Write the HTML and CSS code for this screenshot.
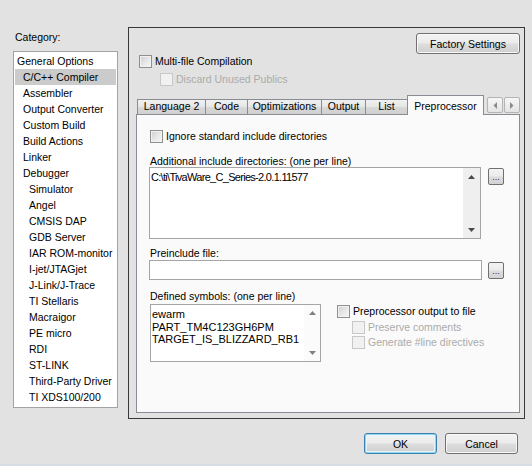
FILE: index.html
```html
<!DOCTYPE html>
<html>
<head>
<meta charset="utf-8">
<link rel="stylesheet" href="styles.css">
</head>
<body>
<div class="window">
  <div class="main">
    <div class="sidebar">
      <div class="cat-label">Category:</div>
      <div class="listbox">
        <div class="item l0">General Options</div>
        <div class="item l1 sel">C/C++ Compiler</div>
        <div class="item l1">Assembler</div>
        <div class="item l1">Output Converter</div>
        <div class="item l1">Custom Build</div>
        <div class="item l1">Build Actions</div>
        <div class="item l1">Linker</div>
        <div class="item l1">Debugger</div>
        <div class="item l2">Simulator</div>
        <div class="item l2">Angel</div>
        <div class="item l2">CMSIS DAP</div>
        <div class="item l2">GDB Server</div>
        <div class="item l2">IAR ROM-monitor</div>
        <div class="item l2">I-jet/JTAGjet</div>
        <div class="item l2">J-Link/J-Trace</div>
        <div class="item l2">TI Stellaris</div>
        <div class="item l2">Macraigor</div>
        <div class="item l2">PE micro</div>
        <div class="item l2">RDI</div>
        <div class="item l2">ST-LINK</div>
        <div class="item l2">Third-Party Driver</div>
        <div class="item l2">TI XDS100/200</div>
      </div>
    </div>
    <div class="panel">
      <div class="panel-head"><div class="btn factory">Factory Settings</div></div>
      <div class="chk row-multi"><span class="box"></span>Multi-file Compilation</div>
      <div class="chk disabled row-discard"><span class="box"></span>Discard Unused Publics</div>
      <div class="tabstrip">
        <div class="tab t-lang">Language 2</div>
        <div class="tab t-code">Code</div>
        <div class="tab t-opt">Optimizations</div>
        <div class="tab t-out">Output</div>
        <div class="tab t-list">List</div>
        <div class="tab active">Preprocessor</div>
        <div class="tab-scroll">
          <span class="sbtn"><svg width="4" height="7" viewBox="0 0 4 7"><polygon points="4,0 4,7 0.5,3.5" fill="#8a8a8a"/></svg></span>
          <span class="sbtn"><svg width="4" height="7" viewBox="0 0 4 7"><polygon points="0,0 0,7 3.5,3.5" fill="#8a8a8a"/></svg></span>
        </div>
      </div>
      <div class="tabpage">
        <div class="chk row-ignore"><span class="box"></span>Ignore standard include directories</div>
        <div class="field-label lbl-add">Additional include directories: (one per line)</div>
        <div class="field-row">
          <div class="textbox ta1">
            <div class="ta-text ta1-text">C:\ti\TivaWare_C_Series-2.0.1.11577</div>
            <div class="vscroll vs1">
              <span class="arrow"><svg width="7" height="4" viewBox="0 0 7 4"><polygon points="0,4 7,4 3.5,0" fill="#4a4a4a"/></svg></span>
              <span class="arrow"><svg width="7" height="4" viewBox="0 0 7 4"><polygon points="0,0 7,0 3.5,4" fill="#4a4a4a"/></svg></span>
            </div>
          </div>
          <div class="browse b1">...</div>
        </div>
        <div class="field-label lbl-pre">Preinclude file:</div>
        <div class="field-row row-input">
          <div class="textbox input1"></div>
          <div class="browse b2">...</div>
        </div>
        <div class="field-label lbl-def">Defined symbols: (one per line)</div>
        <div class="bottom-row">
          <div class="textbox ta2">
            <div class="ta-text ta2-text">ewarm<br>PART_TM4C123GH6PM<br>TARGET_IS_BLIZZARD_RB1</div>
            <div class="vscroll vs2">
              <span class="arrow"><svg width="7" height="4" viewBox="0 0 7 4"><polygon points="0,4 7,4 3.5,0" fill="#808080"/></svg></span>
              <span class="arrow"><svg width="7" height="4" viewBox="0 0 7 4"><polygon points="0,0 7,0 3.5,4" fill="#808080"/></svg></span>
            </div>
          </div>
          <div class="pp-col">
            <div class="chk row-pp"><span class="box"></span>Preprocessor output to file</div>
            <div class="chk disabled row-pres"><span class="box"></span>Preserve comments</div>
            <div class="chk disabled row-gen"><span class="box"></span>Generate #line directives</div>
          </div>
        </div>
      </div>
    </div>
  </div>
  <div class="footer">
    <div class="btn dlg default">OK</div>
    <div class="btn dlg">Cancel</div>
  </div>
  <div class="bottom-edge"></div>
</div>
</body>
</html>
```
FILE: styles.css
```css
body {
  margin: 0;
  font-family: "Liberation Sans", Arial, sans-serif;
  font-size: 10.5px;
  color: #000;
}
.window {
  width: 532px;
  height: 466px;
  background: #e2e2e2;
  display: flex;
  flex-direction: column;
  overflow: hidden;
}
.main {
  display: flex;
  align-items: flex-start;
}
.sidebar {
  margin-left: 13px;
  width: 105px;
  padding-top: 30px;
}
.cat-label {
  line-height: 14px;
  padding-left: 2px;
  margin-bottom: 7px;
}
.listbox {
  height: 357px;
  box-sizing: border-box;
  border: 1px solid #a3a3a3;
  background: #fff;
  padding-top: 1px;
}
.item {
  height: 16px;
  line-height: 16px;
  margin: 0 1px;
  white-space: nowrap;
}
.l0 { padding-left: 2px; }
.l1 { padding-left: 8px; }
.l2 { padding-left: 14px; }
.sel { background: #cbcbcb; }

.panel {
  margin-left: 10px;
  margin-top: 27px;
  width: 397px;
  height: 392px;
  box-sizing: border-box;
  border: 1px solid #383838;
  padding: 5px 4px 5px 7px;
  display: flex;
  flex-direction: column;
}
.panel-head {
  display: flex;
  justify-content: flex-end;
}
.btn {
  box-sizing: border-box;
  border: 1px solid #707070;
  border-radius: 3px;
  background: linear-gradient(#f3f3f3 0%, #ebebeb 48%, #dddddd 52%, #cfcfcf 100%);
  box-shadow: inset 0 0 0 1px #f8f8f8;
  display: flex;
  align-items: center;
  justify-content: center;
  white-space: nowrap;
}
.factory {
  width: 104px;
  height: 21px;
}
.chk {
  display: flex;
  align-items: center;
  height: 14px;
  white-space: nowrap;
}
.box {
  width: 13px;
  height: 13px;
  box-sizing: border-box;
  margin-right: 3px;
  flex: none;
  border: 1px solid #8e8f8f;
  background: linear-gradient(135deg, #cdcdcd 0%, #e6e6e6 50%, #f7f7f7 100%);
  box-shadow: inset 0 0 0 1px #f2f2f2;
}
.chk.disabled { color: #ababab; }
.chk.disabled .box {
  border-color: #c8c8c8;
  background: #f1f1f1;
  box-shadow: none;
}
.row-multi { margin-left: 3px; }
.row-discard { margin-left: 24px; margin-top: 4px; }

.tabstrip {
  margin-top: 9px;
  height: 19px;
  display: flex;
  align-items: flex-end;
  padding-left: 1px;
}
.tab {
  box-sizing: border-box;
  height: 15px;
  line-height: 13px;
  border: 1px solid #898c95;
  border-bottom: none;
  margin-right: -1px;
  text-align: center;
  white-space: nowrap;
  background: linear-gradient(#f0f0f0 0%, #e6e6e6 50%, #d8d8d8 51%, #d0d0d0 100%);
}
.t-lang { width: 69px; }
.t-code { width: 43px; }
.t-opt { width: 75px; }
.t-out { width: 45px; }
.t-list { width: 43px; }
.tab.active {
  width: 77px;
  height: 20px;
  margin-bottom: -1px;
  padding-top: 3px;
  line-height: 14px;
  background: #fafafa;
  position: relative;
  z-index: 1;
}
.tab-scroll {
  margin-left: auto;
  display: flex;
  gap: 1px;
  margin-bottom: 1px;
}
.sbtn {
  width: 16px;
  height: 16px;
  box-sizing: border-box;
  border: 1px solid #b4b4b4;
  border-radius: 2px;
  background: linear-gradient(#f6f6f6, #e4e4e4);
  display: flex;
  align-items: center;
  justify-content: center;
}
.tabpage {
  flex: 1;
  box-sizing: border-box;
  border: 1px solid #898c95;
  background: #fafafa;
  padding-left: 12px;
}
.row-ignore { margin-top: 14px; margin-left: 1px; }
.field-label {
  line-height: 12px;
  padding-left: 1px;
  white-space: nowrap;
}
.lbl-add { margin-top: 12px; }
.lbl-pre { margin-top: 8px; }
.lbl-def { margin-top: 10px; }
.field-row {
  display: flex;
  align-items: flex-start;
}
.textbox {
  box-sizing: border-box;
  border: 1px solid #a5a5a5;
  background: #fff;
  display: flex;
}
.ta1 { width: 332px; height: 72px; }
.ta-text {
  flex: 1;
  font-size: 11px;
  line-height: 13px;
  padding: 3px 0 0 1px;
  white-space: nowrap;
  overflow: hidden;
}
.ta1-text { letter-spacing: -0.7px; }
.vscroll {
  display: flex;
  flex-direction: column;
  justify-content: space-between;
  flex: none;
}
.vs1 {
  width: 17px;
  background: #efefef;
}
.arrow {
  height: 17px;
  display: flex;
  align-items: center;
  justify-content: center;
}
.browse {
  box-sizing: border-box;
  width: 16px;
  border: 1px solid #707070;
  border-radius: 2px;
  background: linear-gradient(#f3f3f3 0%, #ebebeb 48%, #dddddd 52%, #d2d2d2 100%);
  font-size: 9px;
  color: #333;
  display: flex;
  align-items: flex-end;
  justify-content: center;
  padding-bottom: 3px;
  line-height: 8px;
}
.b1 { margin-left: 7px; margin-top: 1px; height: 17px; }
.row-input { margin-top: 1px; }
.input1 { width: 333px; height: 20px; }
.b2 { margin-left: 6px; margin-top: 2px; height: 17px; }
.bottom-row {
  margin-top: 2px;
  display: flex;
  align-items: flex-start;
}
.ta2 { width: 171px; height: 58px; margin-left: 1px; }
.ta2-text { line-height: 12.5px; padding-top: 3px; }
.vs2 { width: 16px; background: #fbfbfb; }
.vs2 .arrow { height: 16px; }
.pp-col {
  margin-left: 16px;
}
.row-pp { margin-top: 0; }
.row-pres { margin-top: 2px; margin-left: 15px; }
.row-gen { margin-top: 1px; margin-left: 15px; }

.footer {
  margin-top: 14px;
  display: flex;
  justify-content: flex-end;
  gap: 8px;
  padding-right: 14px;
}
.dlg {
  width: 73px;
  height: 21px;
}
.default {
  border-color: #3c7fb1;
  box-shadow: inset 0 0 0 1px #8fd6ee, inset 0 0 0 2px #e8f6fb;
}
.bottom-edge {
  margin-top: auto;
  height: 2px;
  background: #d6dde4;
}
```
